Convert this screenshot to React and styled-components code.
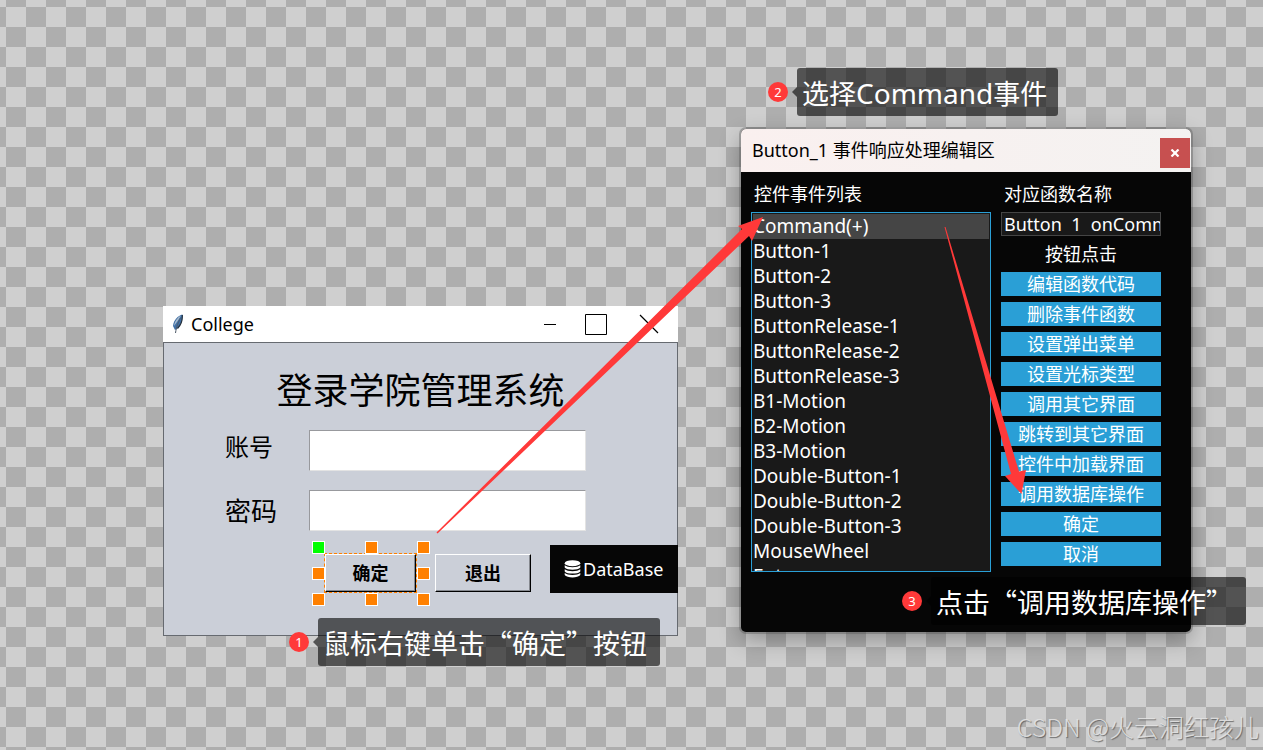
import styled, { createGlobalStyle, css } from "styled-components";

const GlobalStyle = createGlobalStyle`
    *, *::before, *::after {
        box-sizing: border-box;
    }
    html, body, #root {
        height: 100%;
        margin: 0;
    }
    body {
        font-family: "Noto Sans", "Noto Sans CJK SC", sans-serif;
        font-size: 18px;
        line-height: 24px;
    }
    button, input {
        font: inherit;
        margin: 0;
        padding: 0;
        border: 0;
        border-radius: 0;
    }
`

const Desktop = styled.main`
    position: relative;
    min-height: 100%;
    overflow: hidden;
    background: conic-gradient(#aeaeae 25%, #cfcfcf 0 50%, #aeaeae 0 75%, #cfcfcf 0) 6px 7px / 40px 40px;
`

const CollegeWindow = styled.section`
    position: absolute;
    left: 163px;
    top: 306px;
    width: 515px;
    color: #000;
`

const CollegeBar = styled.header`
    display: flex;
    align-items: center;
    height: 36px;
    padding: 0 18px 0 9px;
    gap: 8px;
    background: #fff;

    h1 {
        flex: 1;
        margin: 0;
        font-size: 18px;
        font-weight: 400;
    }
`

const WindowControls = styled.div`
    display: flex;
    gap: 28px;
`

const ControlButton = styled.button`
    display: flex;
    width: 24px;
    height: 24px;
    background: none;
`

const CollegeBody = styled.form`
    display: flex;
    flex-direction: column;
    height: 294px;
    padding-top: 24px;
    background: #cbcfd8;
    border: 1px solid #666a70;
`

const FormTitle = styled.h2`
    margin: 0 0 15px;
    font-size: 36px;
    font-weight: 400;
    line-height: 48px;
    text-align: center;
`

const Field = styled.div`
    display: grid;
    grid-template-columns: 84px 277px;
    align-items: ${props => props.$align || "center"};
    height: 41px;
    margin: 0 0 19px 61px;

    label {
        font-size: ${props => props.$size}px;
        line-height: 34px;
    }
    input {
        height: 41px;
        padding: 0 6px;
        font-size: 24px;
        background: #fff;
        border: 1px solid;
        border-color: #98999d #e3e3e3 #e3e3e3 #98999d;
        outline: 0;
    }
`

const FormActions = styled.div`
    display: flex;
    align-items: flex-end;
    height: 48px;
    margin: -5px -1px 0 161px;
`

const ButtonPair = styled.div`
    display: flex;
    gap: 19px;
    padding-bottom: 1px;
`

const Selection = styled.div`
    position: relative;
    outline: 1px dashed #ff8000;
`

const Handle = styled.span`
    position: absolute;
    width: 13px;
    height: 13px;
    background: ${props => (props.$origin ? "#00ff00" : "#ff8000")};
    border: 1px solid #fff;
    ${props => props.$v === "top" && css`top: -13px;`}
    ${props => props.$v === "middle" && css`top: 13px;`}
    ${props => props.$v === "bottom" && css`bottom: -14px;`}
    ${props => props.$h === "left" && css`left: -13px;`}
    ${props => props.$h === "center" && css`left: 40px;`}
    ${props => props.$h === "right" && css`right: -14px;`}
`

const RaisedButton = styled.button`
    display: block;
    width: ${props => props.$width}px;
    height: 38px;
    color: #000;
    font-weight: 700;
    background: #cbcfd8;
    border: 1px solid;
    border-color: #fff #000 #000 #fff;
    box-shadow: inset -1px -1px #85888e;
`

const DatabaseButton = styled.button`
    display: flex;
    flex: 1;
    align-items: center;
    height: 48px;
    margin-left: 19px;
    padding-left: 14px;
    gap: 2px;
    color: #fff;
    background: #060606;
`

const Dialog = styled.section`
    position: absolute;
    left: 741px;
    top: 129px;
    width: 450px;
    height: 503px;
    color: #fff;
    background: #060606;
    border-radius: 5px;
    box-shadow: 0 0 0 2px rgba(80, 80, 80, 0.35), 0 8px 22px rgba(0, 0, 0, 0.3);
`

const DialogBar = styled.header`
    display: flex;
    align-items: flex-start;
    justify-content: space-between;
    height: 43px;
    padding: 9px 1px 0 11px;
    color: #000;
    background: linear-gradient(90deg, #faf0ef, #f4f2f1);
    border-radius: 5px 5px 0 0;

    h2 {
        margin: 0;
        font-size: 18px;
        font-weight: 400;
    }
`

const CloseButton = styled.button`
    display: grid;
    place-items: center;
    width: 30px;
    height: 30px;
    background: #c75050;
`

const DialogBody = styled.div`
    display: grid;
    grid-template-columns: 240px 160px;
    gap: 10px;
    padding: 10px;
`

const Column = styled.div`
    display: flex;
    flex-direction: column;
    gap: 6px;
`

const Caption = styled.label`
    padding-left: 3px;
`

const EventList = styled.ul`
    height: 360px;
    margin: 0;
    padding: 1px;
    overflow: hidden;
    font-size: 19px;
    list-style: none;
    background: #191919;
    border: 1px solid #2a9fd6;
`

const EventItem = styled.li`
    height: 25px;
    line-height: 25px;
    white-space: nowrap;
    background: ${props => (props.$selected ? "#454545" : "transparent")};
`

const FunctionInput = styled.input`
    width: 160px;
    height: 24px;
    padding-left: 2px;
    color: #fff;
    background: #191919;
    border: 1px solid #454545;
    outline: 0;
`

const Hint = styled.p`
    margin: 0;
    text-align: center;
`

const BlueButton = styled.button`
    height: 24px;
    color: #fff;
    background: #2a9fd6;
`

const Arrows = styled.svg`
    position: absolute;
    left: 0;
    top: 0;
    pointer-events: none;
`

const Callout = styled.aside`
    position: absolute;
    left: ${props => props.$x}px;
    top: ${props => props.$y}px;
    display: flex;
    align-items: center;
    gap: 9px;
`

const Badge = styled.span`
    width: 20px;
    height: 20px;
    color: #fff;
    font-size: 13px;
    line-height: 20px;
    text-align: center;
    background: #ff3939;
    border-radius: 50%;
`

const Bubble = styled.p`
    position: relative;
    width: ${props => props.$width}px;
    height: 48px;
    margin: 0;
    padding-left: 5px;
    color: #fff;
    font-family: "Noto Sans CJK SC", sans-serif;
    font-size: 27px;
    line-height: 50px;
    white-space: nowrap;
    background: rgba(0, 0, 0, 0.6);
    border-radius: 3px;

    &::before {
        content: "";
        position: absolute;
        left: -5px;
        top: 19px;
        border: 5px solid transparent;
        border-left: 0;
        border-right-color: rgba(0, 0, 0, 0.6);
    }
    span {
        font-family: "Noto Sans", sans-serif;
        font-size: 28px;
    }
`

const Watermark = styled.p`
    position: absolute;
    right: 4px;
    bottom: 8px;
    margin: 0;
    color: rgba(228, 228, 228, 0.9);
    font-family: "Noto Sans CJK SC", sans-serif;
    font-size: 25px;
    font-weight: 300;
    line-height: 32px;
    text-shadow: 1px 1px 1px rgba(70, 70, 70, 0.7);
`

const events = [
    "Command(+)",
    "Button-1",
    "Button-2",
    "Button-3",
    "ButtonRelease-1",
    "ButtonRelease-2",
    "ButtonRelease-3",
    "B1-Motion",
    "B2-Motion",
    "B3-Motion",
    "Double-Button-1",
    "Double-Button-2",
    "Double-Button-3",
    "MouseWheel",
    "Enter",
]

const actions = [
    "编辑函数代码",
    "删除事件函数",
    "设置弹出菜单",
    "设置光标类型",
    "调用其它界面",
    "跳转到其它界面",
    "控件中加载界面",
    "调用数据库操作",
    "确定",
    "取消",
]

const handles = [
    ["top", "left"],
    ["top", "center"],
    ["top", "right"],
    ["middle", "left"],
    ["middle", "right"],
    ["bottom", "left"],
    ["bottom", "center"],
    ["bottom", "right"],
]

const FeatherIcon = () => (
    <svg width="11" height="20" viewBox="0 0 11 20" aria-hidden="true">
        <path d="M10.5 0.5C6 1.5 1.5 6 1 12L3 16L6 14C9.5 10 10.8 5 10.5 0.5Z" fill="#3f6fa5" />
        <path d="M9 1.5C6 3 2.5 7 2 12C4.5 9 7 5 9 1.5Z" fill="#a9bccf" />
        <path d="M10.3 1C10.6 6 9 11 5.5 14.5" fill="none" stroke="#26313d" strokeWidth="1.2" />
        <path d="M8.5 4C6.5 8 4.5 12 3.5 19" fill="none" stroke="#4c5866" strokeWidth="1" />
    </svg>
)

const DatabaseIcon = () => (
    <svg width="17" height="18" viewBox="0 0 17 18" fill="#fff" aria-hidden="true">
        <ellipse cx="8.5" cy="3.2" rx="7.8" ry="3" />
        <path d="M0.7 5.2C3.5 7.8 13.5 7.8 16.3 5.2V7.6C14 10.5 3 10.5 0.7 7.6Z" />
        <path d="M0.7 9.2C3.5 11.8 13.5 11.8 16.3 9.2V11.4C14 14.3 3 14.3 0.7 11.4Z" />
        <path d="M0.7 13C3.5 15.6 13.5 15.6 16.3 13V15C14 18.3 3 18.3 0.7 15Z" />
    </svg>
)

const App = () => {
    return (
        <>
            <GlobalStyle />
            <Desktop>
                <CollegeWindow>
                    <CollegeBar>
                        <FeatherIcon />
                        <h1>College</h1>
                        <WindowControls>
                            <ControlButton aria-label="Minimize">
                                <svg width="24" height="24"><path d="M12 12.5H24" stroke="#000" /></svg>
                            </ControlButton>
                            <ControlButton aria-label="Maximize">
                                <svg width="24" height="24"><path d="M1.5 2.5H22.5V22.5H1.5Z" fill="none" stroke="#000" /></svg>
                            </ControlButton>
                            <ControlButton aria-label="Close">
                                <svg width="24" height="24"><path d="M4 3L22 21M22 3L4 21" stroke="#000" strokeWidth="1.2" /></svg>
                            </ControlButton>
                        </WindowControls>
                    </CollegeBar>
                    <CollegeBody onSubmit={e => e.preventDefault()}>
                        <FormTitle>登录学院管理系统</FormTitle>
                        <Field $size={24} $align="start">
                            <label htmlFor="account">账号</label>
                            <input id="account" type="text" />
                        </Field>
                        <Field $size={26}>
                            <label htmlFor="password">密码</label>
                            <input id="password" type="password" />
                        </Field>
                        <FormActions>
                            <ButtonPair>
                                <Selection>
                                    <RaisedButton type="button" $width={91}>确定</RaisedButton>
                                    {handles.map(([v, h]) => (
                                        <Handle key={v + h} $v={v} $h={h} $origin={v === "top" && h === "left"} />
                                    ))}
                                </Selection>
                                <RaisedButton type="button" $width={96}>退出</RaisedButton>
                            </ButtonPair>
                            <DatabaseButton type="button">
                                <DatabaseIcon />
                                DataBase
                            </DatabaseButton>
                        </FormActions>
                    </CollegeBody>
                </CollegeWindow>

                <Dialog>
                    <DialogBar>
                        <h2>Button_1 事件响应处理编辑区</h2>
                        <CloseButton aria-label="关闭">
                            <svg width="10" height="8" viewBox="0 0 10 8"><path d="M1.5 0.5L8.5 7.5M8.5 0.5L1.5 7.5" stroke="#fff" strokeWidth="2.2" /></svg>
                        </CloseButton>
                    </DialogBar>
                    <DialogBody>
                        <Column>
                            <Caption as="span" id="events">控件事件列表</Caption>
                            <EventList aria-labelledby="events">
                                {events.map((name, i) => (
                                    <EventItem key={name} $selected={i === 0}>{name}</EventItem>
                                ))}
                            </EventList>
                        </Column>
                        <Column>
                            <Caption htmlFor="fn">对应函数名称</Caption>
                            <FunctionInput id="fn" type="text" defaultValue="Button  1  onComm" />
                            <Hint>按钮点击</Hint>
                            {actions.map(label => (
                                <BlueButton key={label} type="button">{label}</BlueButton>
                            ))}
                        </Column>
                    </DialogBody>
                </Dialog>

                <Arrows width="1263" height="750" viewBox="0 0 1263 750" fill="#ff3939" aria-hidden="true">
                    <path d="M436.5 532.5L742 229L738 226L763 217L752 241L749 236L437.5 533.5Z" />
                    <path d="M944.5 227L1011 474L1005 476L1021.5 494L1026 470L1019 471.5L945.5 227Z" />
                </Arrows>

                <Callout $x={289} $y={618}>
                    <Badge>1</Badge>
                    <Bubble $width={342}>鼠标右键单击“确定”按钮</Bubble>
                </Callout>
                <Callout $x={768} $y={68}>
                    <Badge>2</Badge>
                    <Bubble $width={261}>选择<span>Command</span>事件</Bubble>
                </Callout>
                <Callout $x={902} $y={577}>
                    <Badge>3</Badge>
                    <Bubble $width={315}>点击“调用数据库操作”</Bubble>
                </Callout>

                <Watermark>CSDN @火云洞红孩儿</Watermark>
            </Desktop>
        </>
    );
}

export default App;
